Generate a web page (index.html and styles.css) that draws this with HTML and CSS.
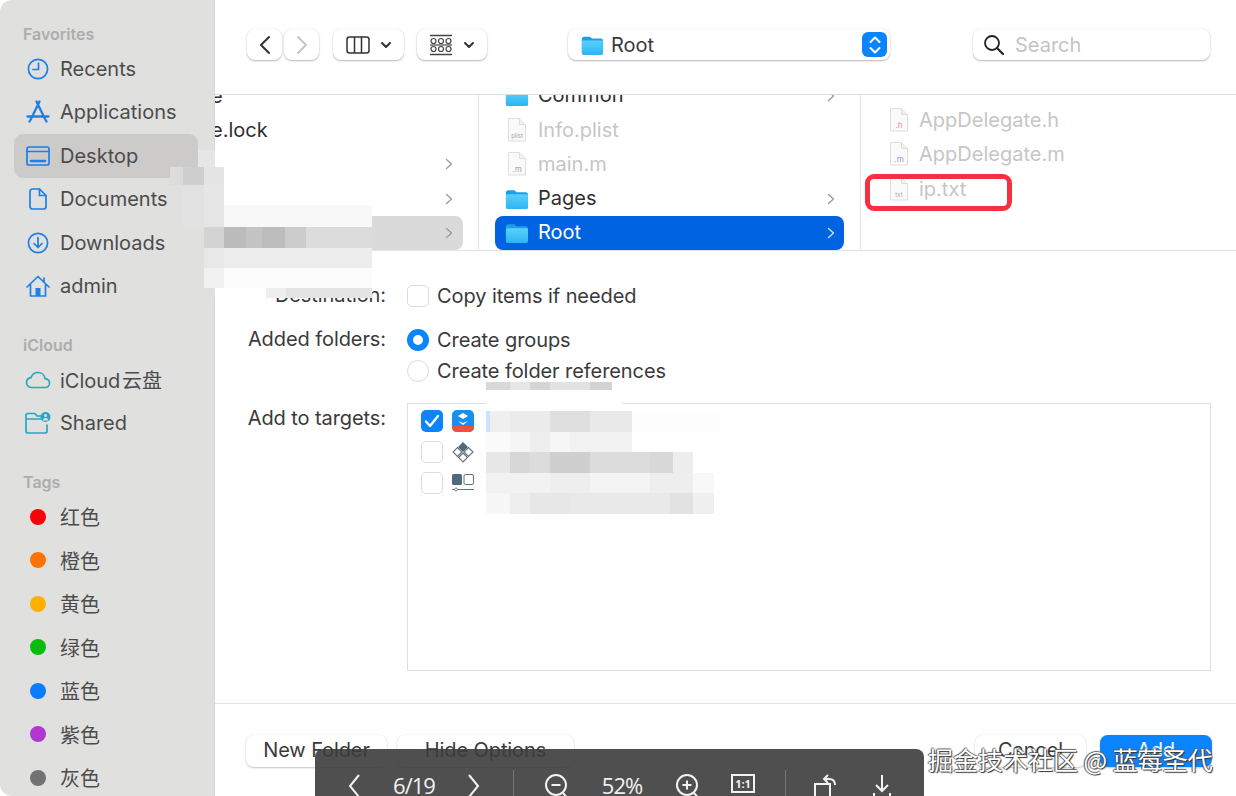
FILE: index.html
```html
<!DOCTYPE html>
<html lang="en">
<head>
    <meta charset="UTF-8">
    <title>Add files to project</title>

    <link rel="stylesheet" href="styles.css">
</head>
<body>
<svg class="defs" width="0" height="0">
    <defs>
        <linearGradient id="folderFill" x1="0" y1="0" x2="0" y2="1">
            <stop offset="0" stop-color="#5cd0fb"/>
            <stop offset="1" stop-color="#2cb4f5"/>
        </linearGradient>
        <symbol id="folder" viewBox="0 0 26 24">
            <path d="M2 5.500C2 4 3 3 4.500 3h5.500c1 0 1.500 .4 2.300 1.300l.7 .7h9.500C24 5 25 6 25 7.500V20c0 1.500-1 2.500-2.500 2.500h-18C3 22.500 2 21.500 2 20z" fill="#1d9fe8"/>
            <path d="M2 8.500c0-.8 .7-1.500 1.500-1.500h20c.8 0 1.500 .7 1.500 1.500V20c0 1.500-1 2.500-2.500 2.500h-18C3 22.500 2 21.500 2 20z" fill="url(#folderFill)"/>
        </symbol>
        <symbol id="page" viewBox="0 0 22 26">
            <path d="M2.500 1.500h11l6 6v16.500h-17z" fill="#fafafa" stroke="#dedede"/>
            <path d="M13.500 1.500v6h6" fill="#f0f0f0" stroke="#dedede"/>
        </symbol>
        <symbol id="chev" viewBox="0 0 8 12">
            <path d="M1.500 1.500L6.500 6l-5 4.500" fill="none" stroke="currentColor" stroke-width="1.400" stroke-linecap="round" stroke-linejoin="round"/>
        </symbol>
    </defs>
</svg>

<div class="window">
    <!-- sidebar -->
    <aside class="sidebar">
        <div class="side-title">Favorites</div>
        <div class="side-row">
            <svg class="side-icon" viewBox="0 0 24 24"><circle cx="12" cy="12" r="9.600"/><path d="M12.500 6v6.500H7"/></svg>
            <span>Recents</span>
        </div>
        <div class="side-row">
            <svg class="side-icon" viewBox="0 0 24 24"><path d="M13.500 1.500L5 19M10.500 1.500L19 19M1.500 16.500h21M3.500 21.500L5 19M20.500 21.500L19 19" stroke-width="2.300"/></svg>
            <span>Applications</span>
        </div>
        <div class="side-row side-row-active">
            <svg class="side-icon" viewBox="0 0 24 24"><rect x="1" y="3" width="22" height="18" rx="2"/><path d="M1 7.500h22"/><path d="M5 17h14" stroke-width="2.600"/></svg>
            <span>Desktop</span>
        </div>
        <div class="side-row">
            <svg class="side-icon" viewBox="0 0 24 24"><path d="M4 4.500C4 3 5 2 6.500 2h7L20 8.500v11c0 1.500-1 2.500-2.500 2.500h-11C5 22 4 21 4 19.500z"/><path d="M13.500 2v6.500H20"/></svg>
            <span>Documents</span>
        </div>
        <div class="side-row">
            <svg class="side-icon" viewBox="0 0 24 24"><circle cx="12" cy="12" r="9.600"/><path d="M12 6.500v10M8 12.500l4 4 4-4"/></svg>
            <span>Downloads</span>
        </div>
        <div class="side-row">
            <svg class="side-icon" viewBox="0 0 24 24"><path d="M1 13L12 2.500 23 13M4.500 10.500V22h15V10.500M18 4v4"/><rect class="icon-solid" x="9.500" y="14" width="5" height="8"/></svg>
            <span>admin</span>
        </div>

        <div class="side-title side-title-gap">iCloud</div>
        <div class="side-row">
            <svg class="side-icon side-icon-teal" viewBox="0 0 26 24"><path d="M7 19.500c-3 0-5.500-2-5.500-5 0-2.500 2-4.500 4.500-4.800C7 6.500 9.800 4.500 13 4.500c3.800 0 6.500 2.700 7 6.200 2.700 .3 4.500 2.200 4.500 4.500 0 2.500-2 4.300-4.500 4.300z"/></svg>
            <span class="side-tight">iCloud 云盘</span>
        </div>
        <div class="side-row">
            <svg class="side-icon side-icon-teal" viewBox="0 0 26 24"><path d="M16 5h-4l-2-2.500H3C2 2.500 1 3.500 1 4.500V20c0 1 1 2 2 2h17c1 0 2-1 2-2v-6M1 8h15"/><circle class="icon-solid" cx="20.500" cy="6" r="5"/><circle cx="20.500" cy="4.600" r="1.500" fill="#e0e0df" stroke="none"/><path d="M17.800 9.500c.3-1.800 1.300-2.500 2.700-2.500s2.400 .7 2.700 2.500z" fill="#e0e0df" stroke="none"/></svg>
            <span>Shared</span>
        </div>

        <div class="side-title side-title-gap">Tags</div>
        <div class="side-row"><i class="dot dot-red"></i><span>红色</span></div>
        <div class="side-row"><i class="dot dot-orange"></i><span>橙色</span></div>
        <div class="side-row"><i class="dot dot-yellow"></i><span>黄色</span></div>
        <div class="side-row"><i class="dot dot-green"></i><span>绿色</span></div>
        <div class="side-row"><i class="dot dot-blue"></i><span>蓝色</span></div>
        <div class="side-row"><i class="dot dot-purple"></i><span>紫色</span></div>
        <div class="side-row"><i class="dot dot-gray"></i><span>灰色</span></div>
    </aside>

    <main class="main">
        <!-- toolbar -->
        <header class="toolbar">
            <div class="tool-btn tool-nav">
                <svg width="14" height="22" viewBox="0 0 14 22"><path d="M11 3l-8 8 8 8" fill="none" stroke="#333" stroke-width="2" stroke-linecap="round" stroke-linejoin="round"/></svg>
            </div>
            <div class="tool-btn tool-nav tool-next">
                <svg width="14" height="22" viewBox="0 0 14 22"><path d="M3 3l8 8-8 8" fill="none" stroke="#c6c6c6" stroke-width="2" stroke-linecap="round" stroke-linejoin="round"/></svg>
            </div>
            <div class="tool-btn tool-view">
                <svg width="24" height="18" viewBox="0 0 24 18"><rect x="1" y="1" width="22" height="16" rx="2.500" fill="none" stroke="#333" stroke-width="1.500"/><path d="M8.500 1v16M15.500 1v16" stroke="#333" stroke-width="1.500"/></svg>
                <svg width="12" height="8" viewBox="0 0 12 8"><path d="M2 2l4 4 4-4" fill="none" stroke="#333" stroke-width="2" stroke-linecap="round" stroke-linejoin="round"/></svg>
            </div>
            <div class="tool-btn tool-group">
                <svg width="24" height="22" viewBox="0 0 24 22" fill="none" stroke="#444" stroke-width="1.200"><path d="M1 1.500h22M1 20.500h22" stroke-width="1.500"/><circle cx="4.500" cy="7" r="2.500"/><circle cx="12" cy="7" r="2.500"/><circle cx="19.500" cy="7" r="2.500"/><circle cx="4.500" cy="15" r="2.500"/><circle cx="12" cy="15" r="2.500"/><circle cx="19.500" cy="15" r="2.500"/><path d="M1 11h22"/></svg>
                <svg width="12" height="8" viewBox="0 0 12 8"><path d="M2 2l4 4 4-4" fill="none" stroke="#333" stroke-width="2" stroke-linecap="round" stroke-linejoin="round"/></svg>
            </div>
            <div class="tool-btn path-popup">
                <svg class="path-folder"><use href="#folder"/></svg>
                <span class="path-name">Root</span>
                <div class="stepper">
                    <svg width="16" height="22" viewBox="0 0 16 22"><path d="M3.500 8L8 3.500 12.500 8M3.500 14L8 18.500 12.500 14" fill="none" stroke="#fff" stroke-width="2" stroke-linecap="round" stroke-linejoin="round"/></svg>
                </div>
            </div>
            <div class="tool-btn search">
                <svg width="22" height="22" viewBox="0 0 22 22"><circle cx="9" cy="9" r="7" fill="none" stroke="#222" stroke-width="1.800"/><path d="M14 14l6 6" stroke="#222" stroke-width="2.200" stroke-linecap="round"/></svg>
                <span>Search</span>
            </div>
        </header>

        <!-- column browser -->
        <section class="browser">
            <div class="col col-first">
                <div class="file-row file-cut">e</div>
                <div class="file-row file-cut">e.lock</div>
                <div class="file-row"><svg class="chev"><use href="#chev"/></svg></div>
                <div class="file-row"><svg class="chev"><use href="#chev"/></svg></div>
                <div class="file-row file-row-grey"><svg class="chev"><use href="#chev"/></svg></div>
            </div>
            <div class="col col-second">
                <div class="file-row"><svg class="row-folder"><use href="#folder"/></svg><span class="file-name">Common</span><svg class="chev"><use href="#chev"/></svg></div>
                <div class="file-row file-off">
                    <span class="doc"><svg class="doc-page"><use href="#page"/></svg><b class="doc-ext doc-ext-small">plist</b></span><span>Info.plist</span>
                </div>
                <div class="file-row file-off">
                    <span class="doc"><svg class="doc-page"><use href="#page"/></svg><b class="doc-ext">.m</b></span><span>main.m</span>
                </div>
                <div class="file-row"><svg class="row-folder"><use href="#folder"/></svg><span class="file-name">Pages</span><svg class="chev"><use href="#chev"/></svg></div>
                <div class="file-row file-row-blue"><svg class="row-folder"><use href="#folder"/></svg><span class="file-name">Root</span><svg class="chev"><use href="#chev"/></svg></div>
            </div>
            <div class="col col-third">
                <div class="file-row file-off">
                    <span class="doc"><svg class="doc-page"><use href="#page"/></svg><b class="doc-ext doc-ext-h">.h</b></span><span>AppDelegate.h</span>
                </div>
                <div class="file-row file-off">
                    <span class="doc"><svg class="doc-page"><use href="#page"/></svg><b class="doc-ext doc-ext-m">.m</b></span><span>AppDelegate.m</span>
                </div>
                <div class="file-row file-off">
                    <span class="doc"><svg class="doc-page"><use href="#page"/></svg><b class="doc-ext doc-ext-small">txt</b></span><span>ip.txt</span>
                </div>
                <div class="red-mark"></div>
            </div>
        </section>

        <!-- options -->
        <section class="options">
            <div class="opt-row">
                <div class="opt-label">Destination:</div>
                <span class="check"></span>
                <span>Copy items if needed</span>
            </div>
            <div class="opt-row opt-row-gap">
                <div class="opt-label">Added folders:</div>
                <span class="radio radio-on"></span>
                <span>Create groups</span>
            </div>
            <div class="opt-row">
                <div class="opt-label"></div>
                <span class="radio"></span>
                <span>Create folder references</span>
            </div>
            <div class="opt-targets">
                <div class="opt-label">Add to targets:</div>
                <div class="target-box">
                    <div class="target-row">
                        <span class="check check-on">
                            <svg width="16" height="14" viewBox="0 0 16 14"><path d="M2 7.500l4 4.500 8-10" fill="none" stroke="#fff" stroke-width="2.400" stroke-linecap="round" stroke-linejoin="round"/></svg>
                        </span>
                        <svg class="target-icon" viewBox="0 0 22 22"><rect width="22" height="22" rx="5" fill="#1590f0"/><path d="M0 16h22v1c0 3-2 5-5 5H5c-3 0-5-2-5-5z" fill="#ee4f43"/><path d="M6 6l5-3 5 3-5 3zM6 11l5 2 5-2-5 4z" fill="#fff"/></svg>
                    </div>
                    <div class="target-row">
                        <span class="check"></span>
                        <svg class="target-icon" viewBox="0 0 22 22"><path d="M11 1l5 5-5 5-5-5z" fill="#50697c"/><path d="M5.500 6.500l4.500 4.500-4.500 4.500L1 11zM16.500 6.500L21 11l-4.500 4.500L12 11zM11 12l4.500 4.500L11 21l-4.500-4.500z" fill="none" stroke="#60727f" stroke-width="1.100"/></svg>
                    </div>
                    <div class="target-row">
                        <span class="check"></span>
                        <svg class="target-icon" viewBox="0 0 22 22"><rect y="2" width="10" height="11" rx="1.500" fill="#50697c"/><rect x="12" y="2.500" width="9.500" height="10" rx="1.500" fill="none" stroke="#60727f"/><path d="M0 17.500h22" stroke="#60727f"/><circle cx="4" cy="17.500" r="1.500" fill="#fff" stroke="#60727f" stroke-width=".8"/></svg>
                    </div>
                </div>
            </div>
        </section>

        <!-- footer buttons -->
        <footer class="footer">
            <div class="foot-btn foot-new">New Folder</div>
            <div class="foot-btn foot-hide">Hide Options</div>
            <div class="foot-btn foot-cancel">Cancel</div>
            <div class="foot-btn foot-add">Add</div>
        </footer>
    </main>
</div>

<!-- pixelated patches that hide names in the screenshot -->
<div class="mosaic mosaic-left">
    <div class="band band-l1"></div>
    <div class="band band-l2"></div>
    <div class="band band-l3"></div>
    <div class="band band-l3b"></div>
    <div class="band band-l4"></div>
    <div class="band band-l5"></div>
    <div class="band band-l6"></div>
    <div class="band band-l7"></div>
</div>
<div class="mosaic mosaic-right">
    <div class="band band-r1"></div>
    <div class="band band-r2"></div>
    <div class="band band-r3"></div>
    <div class="band band-r4"></div>
    <div class="band band-r5"></div>
    <div class="band band-r6"></div>
    <div class="band band-r7"></div>
</div>

<!-- image viewer bar -->
<div class="viewer">
    <svg class="v-icon" width="24" height="26" viewBox="0 0 24 26"><path d="M16 3L7 14l9 11" fill="none" stroke="#f2f2f2" stroke-width="2"/></svg>
    <span class="v-text">6/19</span>
    <svg class="v-icon" width="24" height="26" viewBox="0 0 24 26"><path d="M8 3l9 11-9 11" fill="none" stroke="#f2f2f2" stroke-width="2"/></svg>
    <i class="v-line"></i>
    <svg class="v-icon v-zoom" width="30" height="28" viewBox="0 0 30 28"><circle cx="14" cy="12" r="10" fill="none" stroke="#f2f2f2" stroke-width="2"/><path d="M9.500 12h9M21 20l6 7" stroke="#f2f2f2" stroke-width="2"/></svg>
    <span class="v-text">52%</span>
    <svg class="v-icon v-zoom" width="30" height="28" viewBox="0 0 30 28"><circle cx="14" cy="12" r="10" fill="none" stroke="#f2f2f2" stroke-width="2"/><path d="M9.500 12h9M14 7.500v9M21 20l6 7" stroke="#f2f2f2" stroke-width="2"/></svg>
    <span class="v-ratio">1:1</span>
    <i class="v-line"></i>
    <svg class="v-icon" width="30" height="30" viewBox="0 0 30 30"><rect x="4" y="14" width="15" height="20" fill="none" stroke="#f2f2f2" stroke-width="2"/><path d="M14 9h4c4 0 6 2 6 6M17 5l-4 4 4 4" fill="none" stroke="#f2f2f2" stroke-width="2"/></svg>
    <svg class="v-icon" width="26" height="30" viewBox="0 0 26 30"><path d="M13 5v16M7 15l6 6 6-6M5 23v5h16v-5" fill="none" stroke="#f2f2f2" stroke-width="2"/></svg>
</div>

<div class="watermark">掘金技术社区 @ 蓝莓圣代</div>
</body>
</html>
```

FILE: styles.css
```css
html, body {
    margin: 0;
    height: 100%;
    overflow: hidden;
    background-color: #fff;
}

body {
    position: relative;
    font-family: Inter, "Noto Sans CJK SC", sans-serif;
    font-size: 20px;
    color: #3a3a3a;
}

.defs {
    position: absolute;
}

.window {
    display: flex;
    height: 796px;
}

/* sidebar */
.sidebar {
    width: 215px;
    flex-shrink: 0;
    box-sizing: border-box;
    background-color: #e0e0df;
    border-right: 1px solid #d6d6d6;
    border-radius: 12px 0 0 12px;
    color: #4c4c4c;
}

.side-title {
    height: 20px;
    margin: 24px 0 3px 23px;
    line-height: 20px;
    font-size: 16px;
    font-weight: 600;
    color: #adadad;
}

.side-title-gap {
    margin-top: 27px;
}

.side-row {
    display: flex;
    align-items: center;
    gap: 10px;
    height: 43.5px;
    padding-left: 26px;
}

.side-row-active {
    margin: 0 16px 0 14px;
    padding-left: 12px;
    border-radius: 9px;
    background-color: #cdcbca;
}

.side-tight {
    word-spacing: -4px;
}

.side-icon {
    width: 24px;
    height: 24px;
    flex-shrink: 0;
    fill: none;
    stroke: #1e7fe6;
    stroke-width: 1.700;
    stroke-linecap: round;
    stroke-linejoin: round;
}

.side-icon-teal {
    width: 26px;
    margin-left: -1px;
    margin-right: -1px;
    stroke: #2aa6c4;
}

.icon-solid {
    fill: currentColor;
    stroke: none;
    color: #1e7fe6;
}

.side-icon-teal .icon-solid {
    color: #2aa6c4;
}

.dot {
    width: 16px;
    height: 16px;
    margin: 0 4px;
    border-radius: 50%;
}

.dot-red { background-color: #fb0007; }
.dot-orange { background-color: #fc7405; }
.dot-yellow { background-color: #fcb000; }
.dot-green { background-color: #08bb0c; }
.dot-blue { background-color: #0a7cff; }
.dot-purple { background-color: #b237d2; }
.dot-gray { background-color: #727274; }

/* main */
.main {
    flex: 1;
    display: flex;
    flex-direction: column;
    min-width: 0;
}

.toolbar {
    display: flex;
    align-items: flex-start;
    box-sizing: border-box;
    height: 95px;
    padding: 29px 0 0 32px;
    border-bottom: 1px solid #dddddd;
}

.tool-btn {
    display: flex;
    align-items: center;
    justify-content: center;
    box-sizing: border-box;
    height: 31px;
    border-radius: 8px;
    background-color: #fff;
    box-shadow: 0 1px 2px rgba(0, 0, 0, 0.28), 0 0 1px rgba(0, 0, 0, 0.12);
}

.tool-nav {
    width: 35px;
}

.tool-next {
    margin-left: 2px;
}

.tool-view {
    width: 71px;
    margin-left: 14px;
    gap: 10px;
}

.tool-group {
    width: 70px;
    margin-left: 13px;
    gap: 10px;
}

.path-popup {
    width: 322px;
    margin-left: 81px;
    padding: 0 3px 0 12px;
    justify-content: flex-start;
}

.path-folder {
    width: 24px;
    height: 24px;
}

.path-name {
    margin-left: 7px;
}

.stepper {
    display: flex;
    align-items: center;
    justify-content: center;
    width: 25px;
    height: 25px;
    margin-left: auto;
    border-radius: 6px;
    background-color: #0a84ff;
}

.search {
    width: 237px;
    margin-left: 83px;
    padding-left: 10px;
    justify-content: flex-start;
    gap: 10px;
    color: #c4c4c4;
}

/* column browser */
.browser {
    display: flex;
    box-sizing: border-box;
    height: 156px;
    border-bottom: 1px solid #e3e3e3;
    overflow: hidden;
}

.col {
    position: relative;
    display: flex;
    flex-direction: column;
    box-sizing: border-box;
    height: 155px;
}

.col-first {
    width: 264px;
    justify-content: flex-end;
    border-right: 1px solid #e3e3e3;
}

.col-second {
    width: 382px;
    justify-content: flex-end;
    border-right: 1px solid #e3e3e3;
}

.col-third {
    flex: 1;
    padding: 8px 0 0 26px;
}

.file-row {
    display: flex;
    align-items: center;
    flex-shrink: 0;
    height: 34.300px;
    color: #2f2f2f;
}

.file-cut {
    margin-left: -4px;
}

.col-first .file-row {
    margin-right: 15px;
    padding-right: 10px;
}

.file-row-grey {
    border-radius: 0 8px 8px 0;
    background-color: #dadada;
}

.col-second .file-row {
    margin: 0 16px;
    padding: 0 9px;
}

.file-name {
    margin-bottom: 2px;
}

.file-row-blue {
    border-radius: 8px;
    background-color: #0063e1;
    color: #fff;
}

.file-row.file-off {
    color: #c6c6c6;
}

.row-folder {
    width: 25px;
    height: 24px;
    margin-right: 9px;
    flex-shrink: 0;
}

.chev {
    width: 8px;
    height: 12px;
    margin-left: auto;
    color: #9c9c9c;
}

.file-row-blue .chev {
    color: #cfe0fa;
}

.doc {
    position: relative;
    display: block;
    width: 22px;
    height: 26px;
    margin: 0 9px 0 1px;
    flex-shrink: 0;
}

.col-second .doc {
    margin-left: 2px;
    margin-right: 10px;
}

.doc-page {
    display: block;
    width: 22px;
    height: 26px;
}

.doc-ext {
    position: absolute;
    left: 0;
    right: 0;
    bottom: 3px;
    text-align: center;
    font-size: 8px;
    line-height: 9px;
    font-weight: 400;
    color: #a5a5a5;
}

.doc-ext-small {
    font-size: 6px;
}

.doc-ext-h {
    color: #ef8b9a;
}

.doc-ext-m {
    color: #9a9ae0;
}

.red-mark {
    position: absolute;
    left: 4px;
    top: 79px;
    width: 147px;
    height: 37px;
    box-sizing: border-box;
    border: 5px solid #f6303e;
    border-radius: 9px;
}

/* options */
.options {
    padding: 29px 25px 0 0;
    letter-spacing: -0.08px;
}

.opt-row {
    display: flex;
    align-items: center;
    height: 31px;
}

.opt-row-gap {
    margin-top: 13px;
}

.opt-label {
    width: 171px;
    margin-right: 21px;
    flex-shrink: 0;
    text-align: right;
    line-height: 31px;
}

.check {
    display: inline-flex;
    align-items: center;
    justify-content: center;
    box-sizing: border-box;
    width: 22px;
    height: 22px;
    flex-shrink: 0;
    margin-right: 8px;
    border: 1px solid #dcdcdc;
    border-radius: 5px;
    background-color: #fff;
}

.check-on {
    border: 0;
    background-color: #0a84ff;
}

.radio {
    box-sizing: border-box;
    width: 22px;
    height: 22px;
    flex-shrink: 0;
    margin-right: 8px;
    border: 1px solid #dcdcdc;
    border-radius: 50%;
    background-color: #fff;
}

.radio-on {
    border: 6px solid #0a84ff;
}

.opt-targets {
    display: flex;
    margin-top: 17px;
}

.target-box {
    flex: 1;
    box-sizing: border-box;
    height: 268px;
    padding: 1px 0 0 13px;
    border: 1px solid #dfdfdf;
}

.target-row {
    display: flex;
    align-items: center;
    gap: 9px;
    height: 31px;
}

.target-row .check {
    margin-right: 0;
}

.target-icon {
    width: 22px;
    height: 22px;
}

/* footer */
.footer {
    display: flex;
    align-items: flex-start;
    flex: 1;
    margin-top: 32px;
    padding: 31px 24px 0 31px;
    border-top: 1px solid #e3e3e3;
    letter-spacing: -0.1px;
}

.foot-btn {
    display: flex;
    align-items: center;
    justify-content: center;
    box-sizing: border-box;
    height: 32px;
    padding-bottom: 2px;
    border-radius: 8px;
    background-color: #fff;
    box-shadow: 0 1px 2px rgba(0, 0, 0, 0.22), 0 0 1px rgba(0, 0, 0, 0.12);
}

.foot-new {
    width: 141px;
}

.foot-hide {
    width: 177px;
    margin-left: 10px;
}

.foot-cancel {
    width: 111px;
    margin-left: auto;
}

.foot-add {
    width: 112px;
    margin-left: 14px;
    background-color: #0a84ff;
    color: #fff;
}

/* mosaic patches */
.mosaic {
    position: absolute;
    filter: blur(0.7px);
}

.band {
    height: 20.500px;
}

.mosaic-left {
    left: 170px;
    top: 150px;
    width: 202px;
}

.band-l1 {
    height: 17px;
    background: linear-gradient(90deg, #cdcbca 0 28px, #e6e6e6 28px 45px, transparent 45px);
}

.band-l2 {
    height: 18px;
    background: linear-gradient(90deg, #dcdcdb 0 13px, #cfcfcf 13px 34px, #e5e5e5 34px 54px, transparent 54px);
}

.band-l3 {
    height: 20px;
    background: linear-gradient(90deg, #e0e0df 0 13px, #e2e2e2 13px 34px, #e6e6e6 34px 54px, #fff 54px);
}

.band-l3b {
    height: 22px;
    background: linear-gradient(90deg, #e0e0df 0 13px, #e2e2e2 13px 34px, #e6e6e6 34px 54px, #f8f8f8 54px);
}

.band-l4 {
    background: linear-gradient(90deg, #e0e0df 0 34px, #d3d3d3 34px 54px, #bbbbbb 54px 76px, #c4c4c4 76px 92px, #bdbdbd 92px 115px, #cccccc 115px 136px, #dcdcdc 136px);
}

.band-l5 {
    background: linear-gradient(90deg, #e0e0df 0 34px, #e8e8e8 34px 54px, #ededed 54px);
}

.band-l6 {
    height: 20px;
    background: linear-gradient(90deg, #e0e0df 0 34px, #f1f1f1 34px 54px, #fcfcfc 54px);
}

.band-l7 {
    height: 10px;
    background: linear-gradient(90deg, #e0e0df 0 45px, transparent 45px 96px, #eeeeee 96px 116px, #e4e4e4 116px);
}

.mosaic-right {
    left: 486px;
    top: 382px;
    width: 234px;
}

.band-r1 {
    height: 8px;
    width: 126px;
    background: linear-gradient(90deg, #d8d8d8 0 24px, #e6e6e6 24px 44px, #d5d5d5 44px 64px, #e2e2e2 64px 104px, #d2d2d2 104px);
}

.band-r2 {
    height: 21px;
    width: 136px;
    background-color: #fff;
}

.band-r3 {
    background: linear-gradient(90deg, #cfe2fb 0 4px, #efefef 4px 24px, #ebebeb 24px 64px, #dfdfdf 64px 104px, #e9e9e9 104px 146px, #fdfdfd 146px);
}

.band-r4 {
    background: linear-gradient(90deg, #fafafa 0 24px, #f5f5f5 24px 44px, #eeeeee 44px 64px, #f6f6f6 64px 84px, #f2f2f2 84px 146px, #ffffff 146px);
}

.band-r5 {
    background: linear-gradient(90deg, #e7e7e7 0 24px, #d7d7d7 24px 44px, #dcdcdc 44px 64px, #cfcfcf 64px 104px, #dcdcdc 104px 164px, #d8d8d8 164px 187px, #ededed 187px 207px, #ffffff 207px);
}

.band-r6 {
    background: linear-gradient(90deg, #f2f2f2 0 64px, #eeeeee 64px 104px, #f4f4f4 104px 164px, #eeeeee 164px 207px, #f8f8f8 207px 228px, #ffffff 228px);
}

.band-r7 {
    background: linear-gradient(90deg, #f7f7f7 0 24px, #eeeeee 24px 44px, #e7e7e7 44px 84px, #e9e9e9 84px 184px, #e2e2e2 184px 207px, #f0f0f0 207px 228px, #ffffff 228px);
}

/* viewer bar */
.viewer {
    position: absolute;
    left: 315px;
    top: 749px;
    width: 609px;
    height: 47px;
    box-sizing: border-box;
    padding: 21px 0 0 28px;
    display: grid;
    grid-template-columns: 24px 94px 24px 56px 32px 98px 34px 76px 8px 74px 38px;
    grid-template-rows: 30px;
    align-items: center;
    justify-items: center;
    overflow: hidden;
    border-radius: 8px 8px 0 0;
    background-color: rgba(60, 60, 60, 0.9);
    color: #f2f2f2;
}

.v-icon {
    flex-shrink: 0;
}

.v-zoom {
    margin-top: 3px;
}

.v-text {
    font-family: "Open Sans", sans-serif;
    font-size: 22px;
    line-height: 30px;
    white-space: nowrap;
    letter-spacing: -1px;
}

.v-ratio {
    box-sizing: border-box;
    width: 24px;
    height: 19px;
    margin-bottom: 4px;
    border: 2px solid #f2f2f2;
    font-family: "Open Sans", sans-serif;
    font-size: 11px;
    font-weight: 700;
    line-height: 15px;
    text-align: center;
}

.v-line {
    display: block;
    width: 1px;
    height: 30px;
    background-color: #777;
}

.watermark {
    position: absolute;
    left: 928px;
    top: 744px;
    font-family: "Noto Sans CJK SC", sans-serif;
    font-size: 25px;
    line-height: 30px;
    white-space: nowrap;
    color: #fff;
    text-shadow: 1px 1px 1px #333, -1px 0 1px #555, 0 -1px 1px #666;
}
```
